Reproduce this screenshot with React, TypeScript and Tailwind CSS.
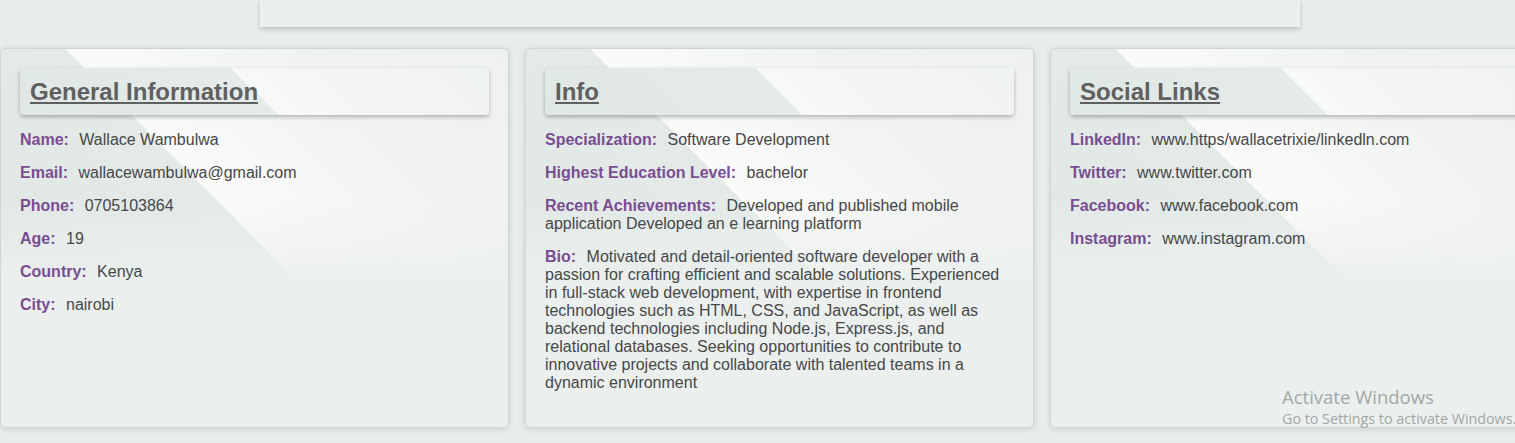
import React from 'react';

type Row = { label: string; value: string };

const general: Row[] = [
  { label: 'Name:', value: 'Wallace Wambulwa' },
  { label: 'Email:', value: 'wallacewambulwa@gmail.com' },
  { label: 'Phone:', value: '0705103864' },
  { label: 'Age:', value: '19' },
  { label: 'Country:', value: 'Kenya' },
  { label: 'City:', value: 'nairobi' },
];

const info: Row[] = [
  { label: 'Specialization:', value: 'Software Development' },
  { label: 'Highest Education Level:', value: 'bachelor' },
  { label: 'Recent Achievements:', value: 'Developed and published mobile application Developed an e learning platform' },
  {
    label: 'Bio:',
    value:
      'Motivated and detail-oriented software developer with a passion for crafting efficient and scalable solutions. Experienced in full-stack web development, with expertise in frontend technologies such as HTML, CSS, and JavaScript, as well as backend technologies including Node.js, Express.js, and relational databases. Seeking opportunities to contribute to innovative projects and collaborate with talented teams in a dynamic environment',
  },
];

const social: Row[] = [
  { label: 'LinkedIn:', value: 'www.https/wallacetrixie/linkedln.com' },
  { label: 'Twitter:', value: 'www.twitter.com' },
  { label: 'Facebook:', value: 'www.facebook.com' },
  { label: 'Instagram:', value: 'www.instagram.com' },
];

const Card: React.FC<{ title: string; rows: Row[] }> = ({ title, rows }) => (
  <div className="w-[509px] h-[380px] shrink-0 rounded-[5px] border border-[#d0d6d5] bg-[linear-gradient(to_bottom,rgba(236,241,240,0)_0%,rgba(236,241,240,0)_40%,#ebf0ee_62%,#ebf0ee_100%),linear-gradient(45deg,#dfe7e5_0%,#e3eae8_50%,#fafafa_50%,#f1f3f3_75%,#eef1f0_100%)] shadow-[0_1px_6px_rgba(0,0,0,0.12)] p-[19px]">
    <div className="rounded-[4px] bg-[linear-gradient(45deg,#e0e8e6_0%,#e4ebe9_50%,#f7f8f8_50%,#eef2f1_100%)] shadow-[0_2px_4px_rgba(0,0,0,0.28)] px-[10px] py-[10px]">
      <h2 className="text-[24px] leading-[27px] font-bold text-[#606060] underline underline-offset-[2px] decoration-[2px]">
        {title}
      </h2>
    </div>
    <div className="mt-[16px] flex flex-col gap-[15px] text-[16px] leading-[18px]">
      {rows.map((r) => (
        <p key={r.label} className="text-[#474747] pr-[12px]">
          <span className="font-bold text-[#7a4d92] mr-[6px]">{r.label}</span> {r.value}
        </p>
      ))}
    </div>
  </div>
);

export default function App() {
  return (
    <div
      className="relative w-[1515px] h-[443px] overflow-hidden bg-[#e7edeb]"
      style={{ fontFamily: '"Liberation Sans", Arial, sans-serif' }}
    >
      <div className="ml-[260px] w-[1040px] h-[27px] bg-[#ebf0ef] shadow-[0_2px_5px_rgba(0,0,0,0.2)]" />
      <div className="mt-[21px] flex gap-[16px]">
        <Card title="General Information" rows={general} />
        <Card title="Info" rows={info} />
        <Card title="Social Links" rows={social} />
      </div>
      <div
        className="absolute left-[1282px] top-[384px] text-[#a3a7a7] whitespace-nowrap"
        style={{ fontFamily: '"Open Sans", "Noto Sans", sans-serif' }}
      >
        <div className="text-[18.5px] leading-[25px]">Activate Windows</div>
        <div className="text-[14.3px] leading-[20px]">Go to Settings to activate Windows.</div>
      </div>
    </div>
  );
}
